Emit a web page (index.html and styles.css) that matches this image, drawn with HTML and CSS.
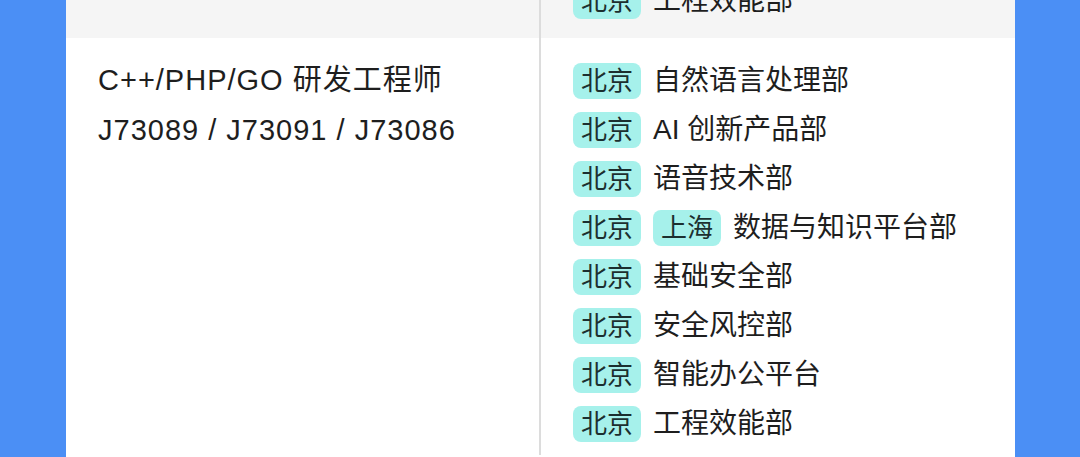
FILE: index.html
```html
<!DOCTYPE html>
<html lang="zh">
<head>
    <meta charset="UTF-8">
    <meta name="viewport" content="width=device-width, initial-scale=1.0">
    <title>职位列表</title>
    <link rel="stylesheet" href="styles.css">
</head>
<body>
    <div class="card">
        <div class="row row-prev">
            <div class="cell-left"></div>
            <div class="cell-right">
                <ul class="dept-list">
                    <li><span class="tag">北京</span><span class="dept">工程效能部</span></li>
                </ul>
            </div>
        </div>

        <div class="row">
            <div class="cell-left">
                <div class="job-title">C++/PHP/GO 研发工程师</div>
                <div class="job-code">J73089 / J73091 / J73086</div>
            </div>
            <div class="cell-right">
                <ul class="dept-list">
                    <li><span class="tag">北京</span><span class="dept">自然语言处理部</span></li>
                    <li><span class="tag">北京</span><span class="dept">AI 创新产品部</span></li>
                    <li><span class="tag">北京</span><span class="dept">语音技术部</span></li>
                    <li><span class="tag">北京</span><span class="tag">上海</span><span class="dept">数据与知识平台部</span></li>
                    <li><span class="tag">北京</span><span class="dept">基础安全部</span></li>
                    <li><span class="tag">北京</span><span class="dept">安全风控部</span></li>
                    <li><span class="tag">北京</span><span class="dept">智能办公平台</span></li>
                    <li><span class="tag">北京</span><span class="dept">工程效能部</span></li>
                </ul>
            </div>
        </div>
    </div>
</body>
</html>
```

FILE: styles.css
```css
/* Basic Styles */
body {
    font-family: "Liberation Sans", "Noto Sans CJK SC", sans-serif;
    margin: 0;
    padding: 0;
    background-color: #4b8ff5;
    color: #1e1e1e;
    height: 457px;
    overflow: hidden;
}

.card {
    margin-left: 66px;
    width: 949px;
    background-color: white;
    min-height: 457px;
}

.row {
    display: grid;
    grid-template-columns: 473px 1fr;
}

.row-prev {
    height: 38px;
    background-color: #f5f5f5;
    overflow: hidden;
}

.cell-left {
    padding: 17px 0 0 32px;
}

.row-prev .cell-left {
    padding: 0;
}

.cell-right {
    border-left: 2px solid #dcdcdc;
    padding: 25px 0 0 32px;
}

.row-prev .cell-right {
    display: flex;
    align-items: flex-end;
    padding: 0 0 19px 32px;
    box-sizing: border-box;
    height: 38px;
}

.job-title,
.job-code {
    font-size: 29px;
    line-height: 50px;
    letter-spacing: 1px;
}

.dept-list {
    list-style: none;
    margin: 0;
    padding: 0;
}

.dept-list li {
    display: flex;
    align-items: center;
    height: 36px;
    margin-bottom: 13px;
}

.row-prev .dept-list li {
    margin-bottom: 0;
}

.tag {
    background-color: #a6f1eb;
    color: #1c2f2f;
    font-size: 26px;
    height: 36px;
    line-height: 36px;
    padding: 0 8px;
    border-radius: 8px;
    margin-right: 12px;
}

.dept {
    font-size: 28px;
    line-height: 36px;
}
```
